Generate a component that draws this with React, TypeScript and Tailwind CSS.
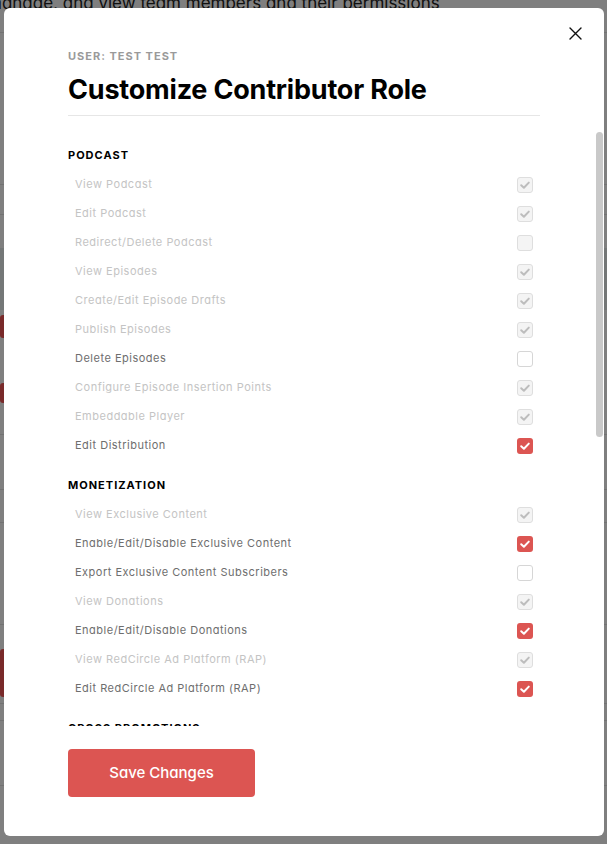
import React from "react";

type Perm = { label: string; state: "dis-on" | "dis-off" | "off" | "on" };
type Section = { title: string; perms: Perm[] };

const sections: Section[] = [
  {
    title: "PODCAST",
    perms: [
      { label: "View Podcast", state: "dis-on" },
      { label: "Edit Podcast", state: "dis-on" },
      { label: "Redirect/Delete Podcast", state: "dis-off" },
      { label: "View Episodes", state: "dis-on" },
      { label: "Create/Edit Episode Drafts", state: "dis-on" },
      { label: "Publish Episodes", state: "dis-on" },
      { label: "Delete Episodes", state: "off" },
      { label: "Configure Episode Insertion Points", state: "dis-on" },
      { label: "Embeddable Player", state: "dis-on" },
      { label: "Edit Distribution", state: "on" },
    ],
  },
  {
    title: "MONETIZATION",
    perms: [
      { label: "View Exclusive Content", state: "dis-on" },
      { label: "Enable/Edit/Disable Exclusive Content", state: "on" },
      { label: "Export Exclusive Content Subscribers", state: "off" },
      { label: "View Donations", state: "dis-on" },
      { label: "Enable/Edit/Disable Donations", state: "on" },
      { label: "View RedCircle Ad Platform (RAP)", state: "dis-on" },
      { label: "Edit RedCircle Ad Platform (RAP)", state: "on" },
    ],
  },
  {
    title: "CROSS PROMOTIONS",
    perms: [
      { label: "View Cross Promotions", state: "dis-on" },
      { label: "Create/Edit Cross Promotions", state: "off" },
      { label: "Accept/Decline Cross Promotions", state: "off" },
      { label: "Delete Cross Promotions", state: "off" },
    ],
  },
  {
    title: "ANALYTICS",
    perms: [
      { label: "View Podcast Analytics", state: "dis-on" },
      { label: "View Episode Analytics", state: "dis-on" },
      { label: "Export Analytics", state: "off" },
    ],
  },
];

function Check({ color }: { color: string }) {
  return (
    <svg width="16" height="16" viewBox="0 0 16 16" fill="none">
      <path
        d="M4.2 8.2 L6.9 10.7 L11.8 5.6"
        stroke={color}
        strokeWidth="2"
        strokeLinecap="round"
        strokeLinejoin="round"
      />
    </svg>
  );
}

function Box({ state }: { state: Perm["state"] }) {
  if (state === "on")
    return (
      <div className="w-4 h-4 rounded-[3px] bg-[#dc5552] flex items-center justify-center">
        <Check color="#ffffff" />
      </div>
    );
  if (state === "dis-on")
    return (
      <div className="w-4 h-4 rounded-[3px] bg-[#f4f4f4] border border-[#dedede] flex items-center justify-center">
        <div className="-m-px">
          <Check color="#bdbdbd" />
        </div>
      </div>
    );
  if (state === "dis-off")
    return <div className="w-4 h-4 rounded-[3px] bg-[#f4f4f4] border border-[#dedede]" />;
  return <div className="w-4 h-4 rounded-[3px] bg-white border border-[#d6d6d6]" />;
}

const font = "font-['Inter','Liberation_Sans',sans-serif] [font-feature-settings:'cv11','ss01']";

export default function App() {
  return (
    <div className={`relative w-[607px] h-[844px] overflow-hidden bg-white ${font}`}>
      {/* background page */}
      <div className="flex flex-col w-full">
        <div className="h-[33px] border-b border-[#e4e4e4] overflow-hidden">
          <p className="-mt-[9px] -ml-[13px] text-[17px] text-[#222] whitespace-nowrap">
            manage, and view team members and their permissions
          </p>
        </div>
        <div className="h-[152px] border-b border-[#e4e4e4]" />
        <div className="h-[30px] border-b border-[#e4e4e4]" />
        <div className="h-[33px]" />
        <div className="h-[62px] bg-[#e9eeee]" />
        <div className="h-[5px]" />
        <div className="h-[23px] w-[90px] bg-[#f25555] rounded-[3px]" />
        <div className="h-[45px]" />
        <div className="h-[20px] w-[90px] bg-[#f25555] rounded-[3px]" />
        <div className="h-[32px] border-b border-[#e4e4e4]" />
        <div className="h-[55px] border-b border-[#e4e4e4]" />
        <div className="h-[33px] border-b border-[#e4e4e4]" />
        <div className="h-[102px] border-b border-[#e4e4e4]" />
        <div className="h-[24px]" />
        <div className="h-[48px] w-[90px] bg-[#f25555] rounded-[3px]" />
        <div className="h-[7px] border-b border-[#e4e4e4]" />
        <div className="h-[17px] border-b border-[#e4e4e4]" />
        <div className="h-[65px] border-b border-[#e4e4e4]" />
      </div>

      {/* overlay */}
      <div className="absolute inset-0 bg-black/50 pt-[8px] pl-[4px]">
        <div className="relative w-[600px] h-[828px] bg-white rounded-[6px] flex flex-col">
          <button className="absolute right-[22px] top-[18px] w-[14px] h-[14px] flex items-center justify-center">
            <svg width="13" height="13" viewBox="0 0 13 13" fill="none">
              <path d="M1 1 L12 12 M12 1 L1 12" stroke="#111" strokeWidth="1.4" strokeLinecap="round" />
            </svg>
          </button>

          <div className="px-[64px] pt-[40px]">
            <div className="text-[11px] leading-[16px] font-bold tracking-[1px] text-[#9a9a9a]">
              USER: TEST TEST
            </div>
            <h1 className="mt-[10px] text-[27px] leading-[32px] font-bold text-black tracking-[-0.2px]">
              Customize Contributor Role
            </h1>
            <div className="mt-[9px] h-px bg-[#e6e6e6]" />
          </div>

          <div className="relative mt-[15px] h-[595px]">
            <div className="h-full overflow-hidden">
              <div className="pl-[64px] pr-[64px] pt-[10px]">
                {sections.map((s) => (
                  <div key={s.title} className="mb-[11px]">
                    <div className="h-[29px] flex items-center text-[11px] font-bold tracking-[1px] text-black">
                      {s.title}
                    </div>
                    {s.perms.map((p) => (
                      <div key={p.label} className="h-[29px] flex items-center justify-between px-[7px]">
                        <span
                          className={`text-[11px] tracking-[0.5px] ${
                            p.state.startsWith("dis") ? "text-[#c4c4c4]" : "text-[#6e6e6e]"
                          }`}
                        >
                          {p.label}
                        </span>
                        <Box state={p.state} />
                      </div>
                    ))}
                  </div>
                ))}
              </div>
            </div>
            <div className="absolute right-[1px] top-[1px] w-[7px] h-[305px] rounded-full bg-[#c9c9c9]" />
          </div>

          <div className="px-[64px] pt-[23px]">
            <button className="w-[187px] h-[48px] rounded-[4px] bg-[#dc5552] text-white text-[15px] font-medium">
              Save Changes
            </button>
          </div>
        </div>
      </div>
    </div>
  );
}
